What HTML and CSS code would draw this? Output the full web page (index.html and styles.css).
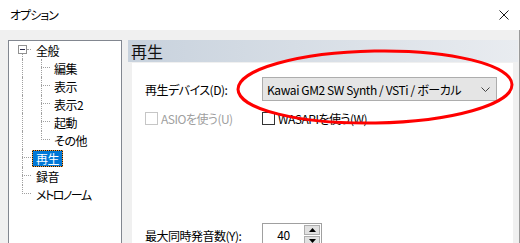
FILE: index.html
```html
<!DOCTYPE html>
<html lang="ja">
<head>
    <meta charset="UTF-8">
    <title>オプション</title>
    <link rel="stylesheet" href="styles.css">
</head>
<body>
    <div class="window">
        <div class="titlebar">
            <span class="title">オプション</span>
            <svg class="close" width="10" height="10" viewBox="0 0 10 10">
                <path d="M0.5 0.5 L9.5 9.5 M9.5 0.5 L0.5 9.5" stroke="#1a1a1a" stroke-width="1" fill="none"/>
            </svg>
        </div>
        <div class="main">
            <div class="tree">
                <div class="row top first"><span class="expander"></span><span class="label">全般</span></div>
                <div class="row child"><i class="v v1"></i><i class="v v2"></i><span class="label">編集</span></div>
                <div class="row child"><i class="v v1"></i><i class="v v2"></i><span class="label">表示</span></div>
                <div class="row child"><i class="v v1"></i><i class="v v2"></i><span class="label">表示2</span></div>
                <div class="row child"><i class="v v1"></i><i class="v v2"></i><span class="label">起動</span></div>
                <div class="row child"><i class="v v1"></i><i class="v v2 half"></i><span class="label">その他</span></div>
                <div class="row top"><i class="v v1"></i><span class="label selected">再生</span></div>
                <div class="row top"><i class="v v1"></i><span class="label">録音</span></div>
                <div class="row top"><i class="v v1 half"></i><span class="label kana">メトロノーム</span></div>
            </div>
            <div class="panel">
                <div class="panel-head">再生</div>
                <div class="panel-body">
                    <div class="field">
                        <span class="field-label">再生デバイス(D):</span>
                        <div class="combo">
                            <span class="combo-text">Kawai GM2 SW Synth / VSTi / ボーカル</span>
                            <svg width="9" height="5" viewBox="0 0 9 5">
                                <path d="M0.5 0.5 L4.5 4.5 L8.5 0.5" stroke="#444" stroke-width="1" fill="none"/>
                            </svg>
                        </div>
                    </div>
                    <div class="checks">
                        <label class="check disabled"><span class="box"></span>ASIOを使う(U)</label>
                        <label class="check"><span class="box"></span>WASAPIを使う(W)</label>
                    </div>
                    <div class="field voices">
                        <span class="field-label">最大同時発音数(Y):</span>
                        <div class="spin">
                            <span class="spin-value">40</span>
                            <div class="spin-buttons">
                                <span class="spin-btn"><svg width="7" height="4" viewBox="0 0 7 4"><path d="M0 4 L3.5 0 L7 4 Z" fill="#000"/></svg></span>
                                <span class="spin-btn"><svg width="7" height="4" viewBox="0 0 7 4"><path d="M0 0 L3.5 4 L7 0 Z" fill="#000"/></svg></span>
                            </div>
                        </div>
                    </div>
                </div>
            </div>
        </div>
        <svg class="marker" width="520" height="243" viewBox="0 0 520 243">
            <ellipse cx="375" cy="87" rx="137" ry="36" transform="rotate(-1 375 87)" fill="none" stroke="#ff0000" stroke-width="3"/>
        </svg>
    </div>
</body>
</html>
```

FILE: styles.css
```css
html, body {
    margin: 0;
    padding: 0;
}
body {
    font-family: "Noto Sans CJK JP", "Noto Sans", sans-serif;
    font-size: 12px;
    color: #000;
    font-feature-settings: "palt";
    letter-spacing: -0.5px;
}
.window {
    position: relative;
    width: 520px;
    height: 243px;
    overflow: hidden;
    background: #f0f0f0;
}
.titlebar {
    display: flex;
    align-items: center;
    justify-content: space-between;
    height: 30px;
    padding: 0 11px 0 10px;
    background: #fff;
}
.title {
    font-size: 12px;
    line-height: 30px;
    letter-spacing: -1px;
}
.main {
    display: flex;
    height: 213px;
    padding: 10px 0 0 8px;
    box-sizing: border-box;
    border-right: 1px solid #9a9a9a;
}

/* tree */
.tree {
    width: 112px;
    flex: none;
    border: 1px solid #828790;
    border-bottom: none;
    background: #fff;
}
.row {
    position: relative;
    height: 18px;
    display: flex;
    align-items: center;
}
.row.top {
    padding-left: 23px;
}
.row.child {
    padding-left: 41px;
}
.row::before {
    content: "";
    position: absolute;
    top: 8px;
    width: 9px;
    border-top: 1px dotted #a0a0a0;
}
.row.top::before {
    left: 13px;
}
.row.first::before {
    left: 18px;
    width: 4px;
}
.row.child::before {
    left: 32px;
}
.v {
    position: absolute;
    top: 0;
    height: 18px;
    border-left: 1px dotted #a0a0a0;
}
.v.half {
    height: 9px;
}
.v1 {
    left: 13px;
}
.v2 {
    left: 32px;
}
.expander {
    position: absolute;
    left: 9px;
    top: 4px;
    width: 7px;
    height: 7px;
    border: 1px solid #919191;
    background: #fff;
}
.expander::after {
    content: "";
    position: absolute;
    left: 1px;
    top: 3px;
    width: 5px;
    border-top: 1px solid #2b2b4b;
}
.row.first::after {
    content: "";
    position: absolute;
    left: 13px;
    top: 13px;
    height: 5px;
    border-left: 1px dotted #a0a0a0;
}
.label {
    padding: 0 3px;
    line-height: 15px;
    border: 1px solid transparent;
}
.label.kana {
    letter-spacing: -1.5px;
}
.label.selected {
    color: #fff;
    border: 1px dotted #f5a040;
    background: linear-gradient(#0078d7, #0078d7) padding-box, #1a1a1a;
}

/* right panel */
.panel {
    flex: 1;
    margin: 0 1px 0 6px;
    display: flex;
    flex-direction: column;
}
.panel-head {
    height: 22px;
    padding-left: 3px;
    font-size: 16px;
    line-height: 22px;
    letter-spacing: 0;
    color: #111;
    background: linear-gradient(to right, #c8d2dd, #e9ecf0);
}
.panel-body {
    flex: 1;
    margin: 1px 5px 0 4px;
    padding: 14px 0 0 13px;
    background: #fff;
}
.field {
    display: flex;
    align-items: center;
}
.field-label {
    width: 117px;
    flex: none;
}
.combo {
    display: flex;
    align-items: center;
    justify-content: space-between;
    width: 223px;
    height: 22px;
    padding: 0 6px 0 4px;
    border: 1px solid #adadad;
    background: #e5e5e5;
}
.combo-text {
    letter-spacing: -0.4px;
}
.checks {
    display: flex;
    margin-top: 11px;
    height: 13px;
    align-items: center;
}
.check {
    display: flex;
    align-items: center;
    width: 117px;
}
.check .box {
    width: 11px;
    height: 11px;
    margin-right: 3px;
    border: 1px solid #333;
    background: #fff;
}
.check.disabled {
    color: #a0a0a0;
}
.check.disabled .box {
    border-color: #c6c6c6;
}
.voices {
    margin-top: 98px;
}
.spin {
    display: flex;
    width: 58px;
    height: 22px;
    border: 1px solid #a0a0a0;
    background: #fff;
}
.spin-value {
    flex: 1;
    text-align: center;
    line-height: 22px;
}
.spin-buttons {
    display: flex;
    flex-direction: column;
    gap: 1px;
    padding: 1px 1px 0 0;
}
.spin-btn {
    display: flex;
    align-items: center;
    justify-content: center;
    width: 14px;
    height: 9px;
    border: 1px solid #adadad;
    background: #e1e1e1;
}
.marker {
    position: absolute;
    left: 0;
    top: 0;
    pointer-events: none;
}
```
